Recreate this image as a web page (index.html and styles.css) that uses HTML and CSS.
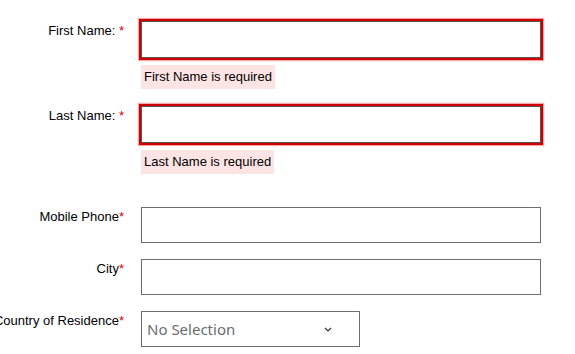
FILE: index.html
```html
<!DOCTYPE html>
<html lang="en">
<head>
  <meta charset="UTF-8">
  <title>Registration</title>
  <link rel="stylesheet" href="styles.css">
</head>
<body>
  <form class="form">

    <!-- Name fields (with validation errors) -->
    <div class="row error">
      <label class="label">First Name:&nbsp;<span class="req">*</span></label>
      <div class="field">
        <input class="input invalid" type="text">
        <div class="msg">First Name is required</div>
      </div>
    </div>

    <div class="row error">
      <label class="label">Last Name:&nbsp;<span class="req">*</span></label>
      <div class="field">
        <input class="input invalid" type="text">
        <div class="msg">Last Name is required</div>
      </div>
    </div>

    <!-- Contact fields -->
    <div class="row spaced">
      <label class="label">Mobile Phone<span class="req">*</span></label>
      <div class="field">
        <input class="input" type="text">
      </div>
    </div>

    <div class="row">
      <label class="label">City<span class="req">*</span></label>
      <div class="field">
        <input class="input" type="text">
      </div>
    </div>

    <div class="row">
      <label class="label">Country of Residence<span class="req">*</span></label>
      <div class="field">
        <div class="select">
          <span>No Selection</span>
          <svg class="chev" width="8" height="5" viewBox="0 0 8 5">
            <path d="M1 1 L4 4 L7 1" fill="none" stroke="#32363a" stroke-width="1.2"/>
          </svg>
        </div>
      </div>
    </div>

  </form>
</body>
</html>
```

FILE: styles.css
```css
body {
  margin: 0;
  background: #fff;
  font-family: "Liberation Sans", Arial, sans-serif;
  font-size: 13px;
  color: #000;
}

.form {
  padding-top: 21px;
}

.row {
  display: grid;
  grid-template-columns: 124px 400px;
  column-gap: 17px;
  margin-bottom: 16px;
}

.row.error {
  margin-bottom: 17px;
}

.row.spaced {
  margin-top: 33px;
}

.label {
  display: flex;
  justify-content: flex-end;
  white-space: nowrap;
  padding-top: 2px;
  line-height: 15px;
}

.req {
  color: #e00000;
}

.field {
  display: flex;
  flex-direction: column;
  align-items: flex-start;
}

.input {
  box-sizing: border-box;
  width: 400px;
  height: 36px;
  margin: 0;
  border: 1px solid #6a6d70;
  background: #fff;
  outline: none;
}

.input.invalid {
  height: 37px;
  border-color: #555;
  box-shadow: 0 0 0 2px #d00000, 0 0 1px 3px rgba(235, 0, 0, 0.35);
}

.msg {
  margin-top: 7px;
  padding: 0 3px;
  height: 24px;
  line-height: 24px;
  background: #fde4e4;
  color: #000;
}

.select {
  box-sizing: border-box;
  width: 219px;
  height: 36px;
  border: 1px solid #6a6d70;
  display: flex;
  align-items: center;
  padding: 0 27px 0 5px;
  justify-content: space-between;
  font-family: "Noto Sans", sans-serif;
  font-size: 15px;
  color: #6a6d70;
}

.chev {
  margin-top: 1px;
}
```
